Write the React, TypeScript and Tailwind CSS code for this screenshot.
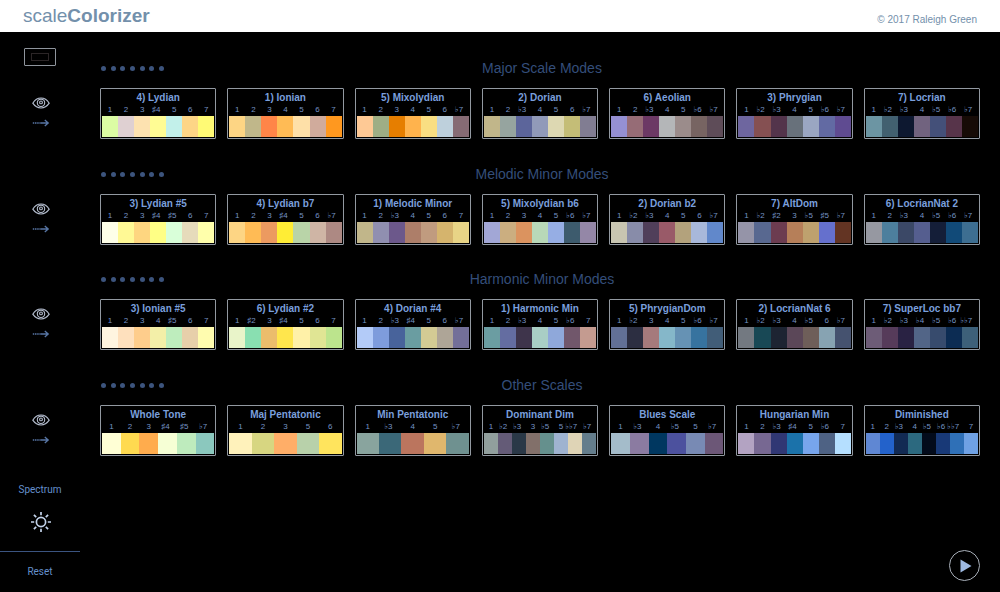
type Scale = { name: string; notes: string; colors: string };
type Family = { title: string; scales: Scale[] };

const families: Family[] = [
  {
    title: "Major Scale Modes",
    scales: [
      { name: "4) Lydian", notes: "1 2 3 ♯4 5 6 7", colors: "#dcfca4 #dfd0d2 #fde2b0 #fffc94 #c2f0ea #fdd586 #fffa75" },
      { name: "1) Ionian", notes: "1 2 3 4 5 6 7", colors: "#fdd584 #c0b78a #ff8548 #ffbb55 #fee0a8 #d0ab9c #ff981f" },
      { name: "5) Mixolydian", notes: "1 2 3 4 5 6 ♭7", colors: "#fec995 #9eae85 #e67e00 #ffb34d #f9de82 #bed0dc #866b74" },
      { name: "2) Dorian", notes: "1 2 ♭3 4 5 6 ♭7", colors: "#c1b68a #96a49f #5c659b #919ab9 #ddd8b2 #c4bd77 #817d92" },
      { name: "6) Aeolian", notes: "1 2 ♭3 4 5 ♭6 ♭7", colors: "#9590d3 #966c76 #6c3965 #b4b6b8 #9b8c8b #776462 #5e4c58" },
      { name: "3) Phrygian", notes: "1 ♭2 ♭3 4 5 ♭6 ♭7", colors: "#6e669f #855052 #53344b #68717b #9aa6c2 #626aa3 #5f4b91" },
      { name: "7) Locrian", notes: "1 ♭2 ♭3 4 ♭5 ♭6 ♭7", colors: "#6c95a3 #426070 #0d1830 #71637f #445079 #57344a #160b06" },
    ],
  },
  {
    title: "Melodic Minor Modes",
    scales: [
      { name: "3) Lydian #5", notes: "1 2 3 ♯4 ♯5 6 7", colors: "#feffe8 #fff995 #fed680 #ffff85 #d9ffd9 #e6dbbb #ffffab" },
      { name: "4) Lydian b7", notes: "1 2 3 ♯4 5 6 ♭7", colors: "#fdd584 #ffbb55 #ec9a60 #ffed35 #b9d4a8 #cfb5a5 #ad8983" },
      { name: "1) Melodic Minor", notes: "1 2 ♭3 4 5 6 7", colors: "#c1b68a #908fb0 #6c588b #ad7e69 #c09b7f #d5b46d #e8d486" },
      { name: "5) Mixolydian b6", notes: "1 2 3 4 5 ♭6 ♭7", colors: "#a2a7d6 #cbae80 #db935f #b8d8b8 #96aee4 #3d5b6d #9487a7" },
      { name: "2) Dorian b2", notes: "1 ♭2 ♭3 4 5 6 ♭7", colors: "#c8c5b1 #888ca9 #503f5a #995a68 #b3a27c #a8b8da #6188cb" },
      { name: "7) AltDom", notes: "1 ♭2 ♯2 3 ♭5 ♯5 ♭7", colors: "#9594a8 #586890 #6c3c50 #b67f59 #bea16e #6570cd #633423" },
      { name: "6) LocrianNat 2", notes: "1 2 ♭3 4 ♭5 ♭6 ♭7", colors: "#9698a1 #4d7f9d #3b4866 #555e8f #141e38 #114a78 #3d6e91" },
    ],
  },
  {
    title: "Harmonic Minor Modes",
    scales: [
      { name: "3) Ionian #5", notes: "1 2 3 4 ♯5 6 7", colors: "#fff5e0 #fee0bd #fecd8c #f3efa8 #beedbd #e7cfaa #fffcaf" },
      { name: "6) Lydian #2", notes: "1 ♯2 3 ♯4 5 6 7", colors: "#e9f4c9 #89dfb1 #ebbd6c #ffe64d #fff1a8 #e0e594 #bce48d" },
      { name: "4) Dorian #4", notes: "1 2 ♭3 ♯4 5 6 ♭7", colors: "#b3cbf8 #7e9cdc #48639b #6a9da1 #d3cb94 #aea597 #736f99" },
      { name: "1) Harmonic Min", notes: "1 2 ♭3 4 5 ♭6 7", colors: "#6b9da2 #646da1 #3e344b #a9cec5 #8fa8da #71576b #c49b90" },
      { name: "5) PhrygianDom", notes: "1 ♭2 3 4 5 ♭6 ♭7", colors: "#627096 #2c2e41 #a57a7c #85b7c9 #6692b4 #37739f #415d78" },
      { name: "2) LocrianNat 6", notes: "1 ♭2 ♭3 4 ♭5 6 ♭7", colors: "#737981 #184855 #1d2432 #5b4758 #6e5e59 #87a3b2 #45526f" },
      { name: "7) SuperLoc bb7", notes: "1 ♭2 ♭3 ♭4 ♭5 ♭6 ♭♭7", colors: "#6d5c77 #563b5a #292243 #526587 #374b6d #0c2c53 #3d6079" },
    ],
  },
  {
    title: "Other Scales",
    scales: [
      { name: "Whole Tone", notes: "1 2 3 ♯4 ♯5 ♭7", colors: "#ffffd5 #ffda50 #ffac4d #f6ffd5 #beebbd #8bc8be" },
      { name: "Maj Pentatonic", notes: "1 2 3 5 6", colors: "#fff2bb #d7d681 #ffae68 #b8d1aa #ffe45d" },
      { name: "Min Pentatonic", notes: "1 ♭3 4 5 ♭7", colors: "#89a49e #3b6878 #bb755e #e0b76d #6f9190" },
      { name: "Dominant Dim", notes: "1 ♭2 ♭3 3 ♭5 5 ♭♭7 ♭7", colors: "#919f9d #645b77 #2a3847 #82706a #65908d #9fb3d0 #dfd4b6 #647d8c" },
      { name: "Blues Scale", notes: "1 ♭3 4 ♭5 5 ♭7", colors: "#a4bcca #8b7ba1 #003760 #4c519e #788ab4 #6c5777" },
      { name: "Hungarian Min", notes: "1 2 ♭3 ♯4 5 ♭6 7", colors: "#b3a3c2 #776892 #303774 #1b72aa #77a5ec #4e6284 #b5dfff" },
      { name: "Diminished", notes: "1 2 ♭3 4 ♭5 ♭6 ♭♭7 7", colors: "#5f87d3 #2362cb #122a53 #2c697f #030b1b #183977 #2f70b7 #6fa1e4" },
    ],
  },
];

function EyeIcon() {
  return (
    <svg viewBox="0 0 18 12" className="h-3 w-[18px]" fill="none" stroke="#b4bdce" aria-hidden="true">
      <path d="M.8 6.200C3 2.600 5.800 1 9 1s6 1.600 8.200 5.200C15 9.400 12.200 11 9 11S3 9.400.8 6.200Z" strokeWidth="1.200" />
      <circle cx="9" cy="5.800" r="3.700" strokeWidth="1.100" />
      <circle cx="9" cy="5.400" r="1.400" strokeWidth="1.100" />
    </svg>
  );
}

function ArrowIcon() {
  return (
    <svg viewBox="0 0 18 8" className="h-2 w-[18px]" fill="none" stroke="#5876a5" aria-hidden="true">
      <path d="M.8 4h8" strokeWidth="1.300" strokeDasharray="1.500 .7" />
      <path d="M9 4h7M12.800 1l3.400 3-3.400 3" strokeWidth="1.300" />
    </svg>
  );
}

function SunIcon() {
  return (
    <svg viewBox="0 0 20 20" className="size-5" fill="none" stroke="#c3d3ea" strokeWidth="1.700" aria-hidden="true">
      <circle cx="10" cy="10" r="4.600" />
      <path d="M10 0v3.200M10 16.800V20M0 10h3.200M16.800 10H20M2.900 2.900l2.300 2.300M14.800 14.800l2.300 2.300M2.900 17.100l2.300-2.300M14.800 5.200l2.300-2.300" />
    </svg>
  );
}

function ScaleCard({ scale }: { scale: Scale }) {
  const notes = scale.notes.split(" ");
  const colors = scale.colors.split(" ");
  return (
    <button
      type="button"
      className="flex h-[51px] min-w-0 flex-1 cursor-pointer flex-col rounded-[1px] border border-[#9299a1] bg-black p-px"
    >
      <span className="w-full pt-0.5 text-center text-[10px] leading-3 font-bold whitespace-nowrap text-[#7a9fdc]">
        {scale.name}
      </span>
      <span className="flex w-full font-['Liberation_Sans','DejaVu_Sans',sans-serif] text-[8px] leading-[11px] text-[#7593c4]">
        {notes.map((note, i) => (
          <span key={i} className="flex flex-1 justify-center">
            <span className="flex w-0 justify-end">{note.slice(0, -1)}</span>
            <span>{note.slice(-1)}</span>
          </span>
        ))}
      </span>
      <span className="mt-px flex w-full flex-1">
        {colors.map((color, i) => (
          <span key={i} className="flex-1" style={{ backgroundColor: color }} />
        ))}
      </span>
    </button>
  );
}

function FamilySection({ family }: { family: Family }) {
  return (
    <section>
      <div className="grid h-6 grid-cols-[1fr_auto_1fr] items-center">
        <div className="flex w-[64px] justify-between pt-px pl-px">
          {[1, 2, 3, 4, 5, 6, 7].map((n) => (
            <button
              key={n}
              type="button"
              aria-label={`Degree ${n}`}
              className="size-[5px] cursor-pointer rounded-full bg-[#3c547d]"
            />
          ))}
        </div>
        <h2 className="pl-1 text-[14px] leading-6 text-[#344e7a]">{family.title}</h2>
      </div>
      <div className="mt-2 flex gap-[11px]">
        {family.scales.map((scale) => (
          <ScaleCard key={scale.name} scale={scale} />
        ))}
      </div>
    </section>
  );
}

export default function App() {
  return (
    <div className="flex min-h-screen flex-col bg-black font-['Liberation_Sans',Arial,sans-serif]">
      <header className="flex h-8 items-center justify-between bg-white px-[23px] text-[#7390ab]">
        <h1 className="text-[19px] leading-8">
          scale<b>Colorizer</b>
        </h1>
        <p className="pt-2 text-[10px] leading-4">© 2017 Raleigh Green</p>
      </header>
      <div className="flex flex-1">
        <aside className="flex w-20 shrink-0 flex-col items-center pt-4 font-[Roboto,sans-serif] text-[10px] text-[#6590cc]">
          <button
            type="button"
            aria-label="Display"
            className="flex h-[18px] w-8 cursor-pointer items-center justify-center rounded-[1px] border border-[#8f959d]"
          >
            <span className="h-2 w-[18px] border border-[#2b2526]" />
          </button>
          <div className="mt-[31px] flex flex-1 flex-col justify-between pl-0.5">
            {families.map((family) => (
              <div key={family.title} className="flex flex-col gap-2.5">
                <button type="button" aria-label={`Show ${family.title}`} className="cursor-pointer">
                  <EyeIcon />
                </button>
                <button type="button" aria-label={`Next ${family.title}`} className="cursor-pointer">
                  <ArrowIcon />
                </button>
              </div>
            ))}
          </div>
          <button type="button" className="mt-10 cursor-pointer leading-3">
            Spectrum
          </button>
          <button type="button" aria-label="Brightness" className="mt-4 cursor-pointer pl-px">
            <SunIcon />
          </button>
          <div className="mt-[19px] w-full border-t border-[#3b5480]" />
          <button type="button" className="mt-3.5 mb-3.5 cursor-pointer leading-3">
            Reset
          </button>
        </aside>
        <main className="flex min-w-0 flex-1 flex-col px-5 pt-6">
          <div className="flex flex-1 flex-col justify-between">
            {families.map((family) => (
              <FamilySection key={family.title} family={family} />
            ))}
          </div>
          <div className="mt-[94px] mb-[11px] flex justify-end">
            <button
              type="button"
              aria-label="Play"
              className="flex size-[31px] cursor-pointer items-center justify-center rounded-full border border-[#a9b0ba]"
            >
              <svg viewBox="0 0 12 14" className="ml-0.5 h-3.5 w-3" fill="#9db9e2" aria-hidden="true">
                <path d="M.5.5l11 6.500-11 6.500z" />
              </svg>
            </button>
          </div>
        </main>
      </div>
    </div>
  );
}
